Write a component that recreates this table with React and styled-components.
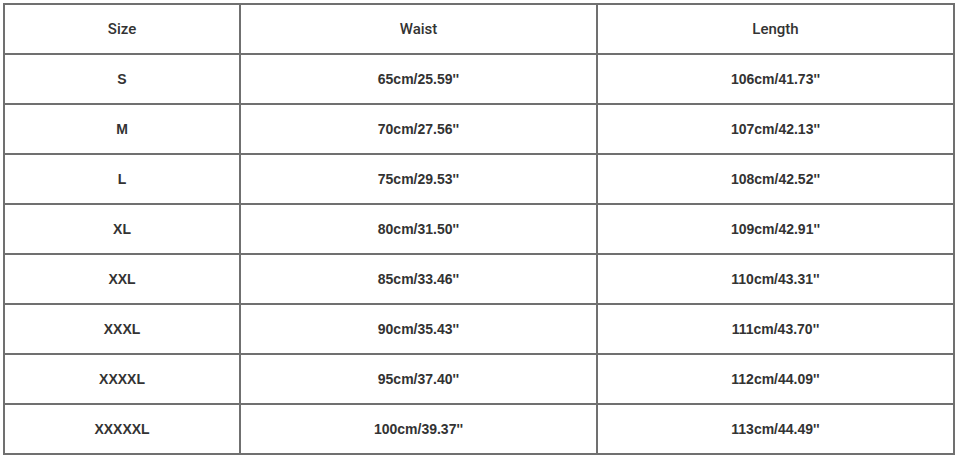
import React from "react";
import styled, { createGlobalStyle } from "styled-components";

const Global = createGlobalStyle`
  html, body { margin: 0; padding: 0; background: #fff; }
  body { font-family: "Liberation Sans", Arial, sans-serif; }
`;

const Page = styled.div`
  padding: 3px 0 0 3px;
  width: 956px;
  height: 457px;
  box-sizing: border-box;
`;

const Table = styled.table`
  border-collapse: collapse;
  table-layout: fixed;
  width: 950px;
  border: 2px solid #7a7a7a;
`;

const Col = styled.col`
  width: ${(p) => p.$w}px;
`;

const Row = styled.tr`
  height: 50px;
`;

const HeadCell = styled.th`
  border: 2px solid #707070;
  padding: 0;
  text-align: center;
  vertical-align: middle;
  font-family: Roboto, "Liberation Sans", Arial, sans-serif;
  font-weight: 500;
  font-size: 15px;
  color: #333;
`;

const Cell = styled.td`
  border: 2px solid #707070;
  padding: 0;
  text-align: center;
  vertical-align: middle;
  font-family: "Liberation Sans", Arial, sans-serif;
  font-weight: bold;
  font-size: 14px;
  color: #333;
`;

const rows = [
  ["S", "65cm/25.59''", "106cm/41.73''"],
  ["M", "70cm/27.56''", "107cm/42.13''"],
  ["L", "75cm/29.53''", "108cm/42.52''"],
  ["XL", "80cm/31.50''", "109cm/42.91''"],
  ["XXL", "85cm/33.46''", "110cm/43.31''"],
  ["XXXL", "90cm/35.43''", "111cm/43.70''"],
  ["XXXXL", "95cm/37.40''", "112cm/44.09''"],
  ["XXXXXL", "100cm/39.37''", "113cm/44.49''"],
];

export default function App() {
  return (
    <Page>
      <Global />
      <Table>
        <colgroup>
          <Col $w={236} />
          <Col $w={357} />
          <Col $w={357} />
        </colgroup>
        <thead>
          <Row>
            <HeadCell>Size</HeadCell>
            <HeadCell>Waist</HeadCell>
            <HeadCell>Length</HeadCell>
          </Row>
        </thead>
        <tbody>
          {rows.map((r) => (
            <Row key={r[0]}>
              {r.map((c, i) => (
                <Cell key={i}>{c}</Cell>
              ))}
            </Row>
          ))}
        </tbody>
      </Table>
    </Page>
  );
}
